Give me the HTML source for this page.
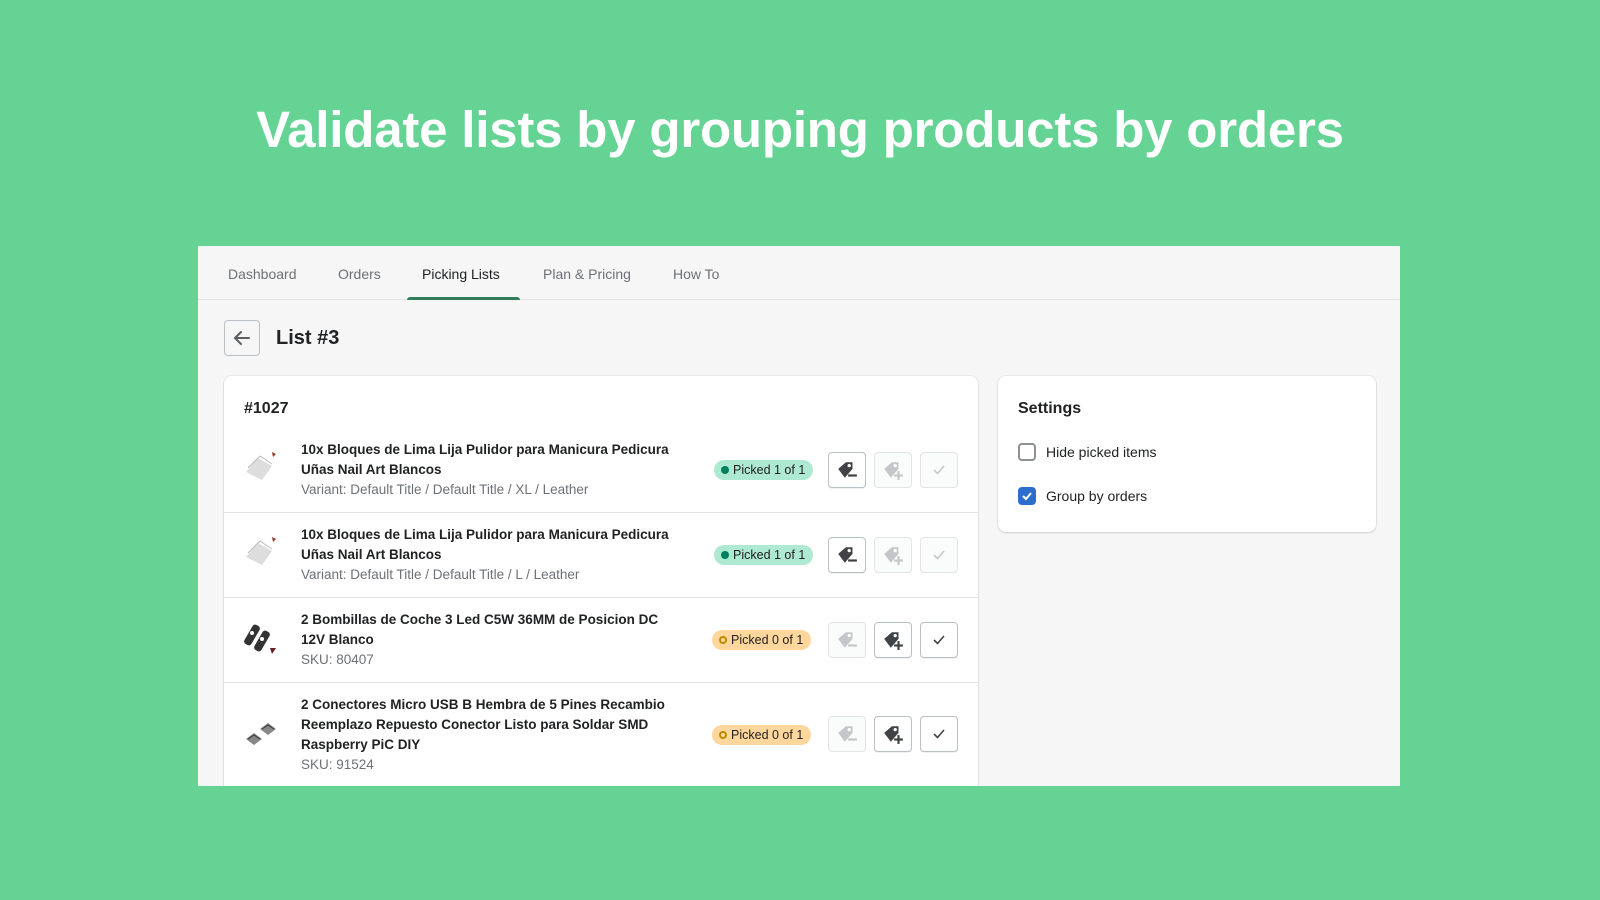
<!DOCTYPE html>
<html><head><meta charset="utf-8"><style>
*{margin:0;padding:0;box-sizing:border-box}
body{width:1600px;height:900px;background:#65D394;font-family:"Liberation Sans",sans-serif;position:relative;overflow:hidden;color:#202223}
h1{position:absolute;top:100px;left:0;width:1600px;text-align:center;color:#fff;font-size:51px;font-weight:bold;letter-spacing:-0.2px}
.panel{position:absolute;left:198px;top:246px;width:1202px;height:540px;background:#f6f6f7;overflow:hidden}
.nav{height:54px;border-bottom:1px solid #e1e3e5;position:relative}
.tab{position:absolute;top:20px;font-size:14px;color:#6d7175}
.tab.a{color:#202223}
.ul{position:absolute;left:209px;top:51px;width:113px;height:3px;background:#2f7d5b;border-radius:3px 3px 0 0}
.back{position:absolute;left:26px;top:74px;width:36px;height:36px;border:1px solid #babfc3;border-radius:4px;background:#f6f6f7}
.ttl{position:absolute;left:78px;top:81px;font-size:20px;font-weight:bold}
.card{position:absolute;left:26px;top:130px;width:754px;height:500px;background:#fff;border-radius:8px;box-shadow:0 0 0 1px rgba(0,0,0,.04),0 1px 2px rgba(0,0,0,.12)}
.card .h{position:absolute;left:20px;top:24px;font-size:16px;font-weight:bold}
.row{position:absolute;left:0;width:754px;border-top:1px solid #e1e3e5}
.t{position:absolute;left:77px;font-size:13.5px;font-weight:bold;line-height:20px;width:375px}
.t span{font-weight:normal;color:#6d7175}
.badge{position:absolute;left:490px;height:20px;border-radius:10px;font-size:12.5px;line-height:20px;padding:0 8px 0 19px}
.badge:before{content:"";position:absolute;left:7px;top:6px;width:8px;height:8px;border-radius:50%}
.g{background:#aee9d1;color:#202223}.g:before{background:#007f5f}
.y{background:#ffd79d;color:#202223;left:488px}.y:before{border:2px solid #b98900;width:4px;height:4px}
.b{position:absolute;width:38px;height:36px;border:1px solid #babfc3;border-radius:4px;background:#fff;display:flex;align-items:center;justify-content:center;box-shadow:0 1px 0 rgba(0,0,0,.05)}
.b.d{border-color:#e1e3e5;background:#fafbfb;box-shadow:none}
.img{position:absolute;left:18px;width:40px;height:40px}
.set{position:absolute;left:800px;top:130px;width:378px;height:156px;background:#fff;border-radius:8px;box-shadow:0 0 0 1px rgba(0,0,0,.04),0 1px 2px rgba(0,0,0,.12)}
.set .h{position:absolute;left:20px;top:24px;font-size:16px;font-weight:bold}
.cb{position:absolute;left:20px;width:18px;height:18px;border:2px solid #8c9196;border-radius:4px}
.cb.on{background:#2c6ecb;border-color:#2c6ecb}
.lb{position:absolute;left:48px;font-size:14px}
</style></head><body>
<h1>Validate lists by grouping products by orders</h1>
<div class="panel">
 <div class="nav">
  <div class="tab" style="left:30px">Dashboard</div>
  <div class="tab" style="left:140px">Orders</div>
  <div class="tab a" style="left:224px">Picking Lists</div>
  <div class="tab" style="left:345px">Plan &amp; Pricing</div>
  <div class="tab" style="left:475px">How To</div>
  <div class="ul"></div>
 </div>
 <div class="back"><svg width="34" height="34" viewBox="0 0 34 34"><path d="M24 17H10M16 11l-6 6 6 6" stroke="#5c5f62" stroke-width="2" fill="none" stroke-linecap="round" stroke-linejoin="round"/></svg></div>
 <div class="ttl">List #3</div>
 <div class="card">
  <div class="h">#1027</div>
  <svg width="0" height="0" style="position:absolute"><defs>
   <symbol id="tm" viewBox="0 0 20 20"><path d="M2 9l7-6h6v6l-7 8z" fill="currentColor"/><circle cx="12" cy="6" r="1.5" fill="#fff"/><rect x="11" y="14" width="8" height="2" fill="currentColor"/></symbol>
   <symbol id="tp" viewBox="0 0 20 20"><path d="M2 9l7-6h6v6l-7 8z" fill="currentColor"/><circle cx="12" cy="6" r="1.5" fill="#fff"/><rect x="11" y="14" width="8" height="2" fill="currentColor"/><rect x="14" y="11" width="2" height="8" fill="currentColor"/></symbol>
  </defs></svg>
  <div class="row" style="top:52px;height:84px;border-top:none">
   <svg class="img" style="top:18px" viewBox="0 0 40 40"><path d="M4 26l12-14 14 8-10 14z" fill="#ddd"/><path d="M6 22l12-12 12 8" stroke="#bbb" fill="none"/><path d="M30 6l4 2-3 3z" fill="#8b3a2a"/></svg>
   <div class="t" style="top:12px">10x Bloques de Lima Lija Pulidor para Manicura Pedicura Uñas Nail Art Blancos<br><span>Variant: Default Title / Default Title / XL / Leather</span></div>
   <div class="badge g" style="top:32px">Picked 1 of 1</div>
   <div class="b" style="left:604px;top:24px;color:#404346"><svg width="22" height="22"><use href="#tm"/></svg></div>
   <div class="b d" style="left:650px;top:24px;color:#c4c7ca"><svg width="22" height="22"><use href="#tp"/></svg></div>
   <div class="b d" style="left:696px;top:24px"><svg width="14" height="14" viewBox="0 0 14 14"><path d="M2 7l3.5 3.5L12 3" stroke="#c4c7ca" stroke-width="1.6" fill="none"/></svg></div>
  </div>
  <div class="row" style="top:136px;height:85px">
   <svg class="img" style="top:18px" viewBox="0 0 40 40"><path d="M4 26l12-14 14 8-10 14z" fill="#ddd"/><path d="M6 22l12-12 12 8" stroke="#bbb" fill="none"/><path d="M30 6l4 2-3 3z" fill="#8b3a2a"/></svg>
   <div class="t" style="top:12px">10x Bloques de Lima Lija Pulidor para Manicura Pedicura Uñas Nail Art Blancos<br><span>Variant: Default Title / Default Title / L / Leather</span></div>
   <div class="badge g" style="top:32px">Picked 1 of 1</div>
   <div class="b" style="left:604px;top:24px;color:#404346"><svg width="22" height="22"><use href="#tm"/></svg></div>
   <div class="b d" style="left:650px;top:24px;color:#c4c7ca"><svg width="22" height="22"><use href="#tp"/></svg></div>
   <div class="b d" style="left:696px;top:24px"><svg width="14" height="14" viewBox="0 0 14 14"><path d="M2 7l3.5 3.5L12 3" stroke="#c4c7ca" stroke-width="1.6" fill="none"/></svg></div>
  </div>
  <div class="row" style="top:221px;height:85px">
   <svg class="img" style="top:20px" viewBox="0 0 40 40"><rect x="6" y="6" width="8" height="22" rx="3" transform="rotate(30 10 17)" fill="#333"/><rect x="16" y="12" width="8" height="22" rx="3" transform="rotate(30 20 23)" fill="#333"/><circle cx="10" cy="15" r="2" fill="#fff"/><circle cx="20" cy="21" r="2" fill="#fff"/><path d="M28 30l6 0-4 6z" fill="#6a2020"/></svg>
   <div class="t" style="top:12px">2 Bombillas de Coche 3 Led C5W 36MM de Posicion DC 12V Blanco<br><span>SKU: 80407</span></div>
   <div class="badge y" style="top:32px">Picked 0 of 1</div>
   <div class="b d" style="left:604px;top:24px;color:#c4c7ca"><svg width="22" height="22"><use href="#tm"/></svg></div>
   <div class="b" style="left:650px;top:24px;color:#404346"><svg width="22" height="22"><use href="#tp"/></svg></div>
   <div class="b" style="left:696px;top:24px"><svg width="14" height="14" viewBox="0 0 14 14"><path d="M2 7l3.5 3.5L12 3" stroke="#404346" stroke-width="1.6" fill="none"/></svg></div>
  </div>
  <div class="row" style="top:306px;height:120px">
   <svg class="img" style="top:30px" viewBox="0 0 40 40"><path d="M4 26l8-6 8 6-8 6z" fill="#888"/><path d="M18 16l8-6 8 6-8 6z" fill="#888"/><path d="M6 26l6-4 6 4" stroke="#333" fill="none"/><path d="M20 16l6-4 6 4" stroke="#333" fill="none"/></svg>
   <div class="t" style="top:12px">2 Conectores Micro USB B Hembra de 5 Pines Recambio Reemplazo Repuesto Conector Listo para Soldar SMD Raspberry PiC DIY<br><span>SKU: 91524</span></div>
   <div class="badge y" style="top:42px">Picked 0 of 1</div>
   <div class="b d" style="left:604px;top:33px;color:#c4c7ca"><svg width="22" height="22"><use href="#tm"/></svg></div>
   <div class="b" style="left:650px;top:33px;color:#404346"><svg width="22" height="22"><use href="#tp"/></svg></div>
   <div class="b" style="left:696px;top:33px"><svg width="14" height="14" viewBox="0 0 14 14"><path d="M2 7l3.5 3.5L12 3" stroke="#404346" stroke-width="1.6" fill="none"/></svg></div>
  </div>
 </div>
 <div class="set">
  <div class="h">Settings</div>
  <div class="cb" style="top:67px"></div><div class="lb" style="top:68px">Hide picked items</div>
  <div class="cb on" style="top:111px"><svg width="14" height="14" viewBox="0 0 14 14" style="position:absolute;left:0;top:0"><path d="M3 7l3 3 5-6" stroke="#fff" stroke-width="2" fill="none"/></svg></div><div class="lb" style="top:112px">Group by orders</div>
 </div>
</div>
</body></html>
